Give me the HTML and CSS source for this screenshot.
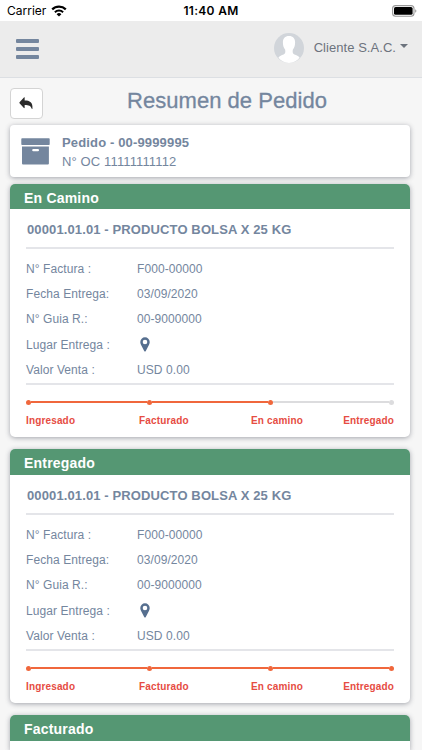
FILE: index.html
```html
<!DOCTYPE html>
<html lang="es">
<head>
    <meta charset="UTF-8">
    <meta name="viewport" content="width=device-width, initial-scale=1.0">
    <title>Resumen de Pedido</title>
    <link rel="stylesheet" href="styles.css">
</head>
<body>
    <div class="status-bar">
        <div class="carrier">
            <span>Carrier</span>
            <svg class="wifi" viewBox="0 0 16 12" width="16" height="12">
                <path d="M1.2 4.4a9.7 9.7 0 0 1 13.6 0" fill="none" stroke="#000" stroke-width="2.2"/>
                <path d="M3.9 7.2a5.9 5.9 0 0 1 8.2 0" fill="none" stroke="#000" stroke-width="2"/>
                <path d="M8 11.6L5.6 9.2a3.4 3.4 0 0 1 4.8 0z"/>
            </svg>
        </div>
        <div class="clock">11:40 AM</div>
        <svg class="battery" viewBox="0 0 25 12" width="25" height="12">
            <rect x="0.6" y="0.6" width="21.4" height="10.6" rx="3" fill="none" stroke="#999" stroke-width="1.1"/>
            <rect x="2" y="2" width="18.6" height="7.8" rx="1.6"/>
            <path d="M23.2 4.2v3.6q1.2-.6 1.2-1.8t-1.2-1.8z" fill="#999"/>
        </svg>
    </div>

    <header class="navbar">
        <div class="menu"><span></span><span></span><span></span></div>
        <div class="user">
            <svg class="avatar" viewBox="0 0 30 30" width="30" height="30">
                <circle cx="15" cy="15" r="15" fill="#d1d5da"/>
                <path d="M15 3c4 0 6.2 2.6 6.1 6.5 0 3-.9 5.6-2.3 7.3-.3 2.5-.2 3.9 1.6 4.8 2 .9 4.2 1.3 5.200 3.100A15 15 0 0 1 15 30 15 15 0 0 1 4.400 24.700c1.200-1.800 3.200-2.200 5.200-3.100 1.800-.9 1.900-2.300 1.600-4.800-1.400-1.700-2.300-4.300-2.300-7.300C8.800 5.600 11 3 15 3z" fill="#fff"/>
            </svg>
            <span class="user-name">Cliente S.A.C.</span>
            <span class="caret"></span>
        </div>
    </header>

    <main>
        <div class="title-row">
            <button class="back">
                <svg viewBox="0 0 16 14" width="15" height="13">
                    <path d="M6 0.7v3c5.600 0 9 1.800 8.400 9-.1.400-.5.400-.7 0C12.700 9.500 10.600 8.500 6 8.500v3.100c0 .5-.4.600-.8.300L.5 6.700a.8.8 0 0 1 0-1L5.200.5c.4-.4.800-.3.800.2z" fill="#2b2b2b"/>
                </svg>
            </button>
            <h1>Resumen de Pedido</h1>
        </div>

        <section class="order">
            <svg viewBox="0 0 29 27" width="29" height="27">
                <rect x="0.3" y="0.3" width="28.4" height="6.7" rx="0.8" fill="#74869e"/>
                <path d="M1 8.500h26.900v17.100q0 1-1 1H2q-1 0-1-1z" fill="#74869e"/>
                <rect x="11.2" y="11" width="6.8" height="2.3" rx="1.1" fill="#fff"/>
            </svg>
            <div>
                <div class="order-id">Pedido - 00-9999995</div>
                <div class="order-oc">N° OC 11111111112</div>
            </div>
        </section>

        <section class="card card-first">
            <h2>En Camino</h2>
            <div class="card-body">
                <h3>00001.01.01 - PRODUCTO BOLSA X 25 KG</h3>
                <dl>
                    <dt>N° Factura :</dt><dd>F000-00000</dd>
                    <dt>Fecha Entrega:</dt><dd>03/09/2020</dd>
                    <dt>N° Guia R.:</dt><dd>00-9000000</dd>
                    <dt>Lugar Entrega :</dt>
                    <dd>
                        <svg class="pin" viewBox="0 0 10 15" width="10" height="15">
                            <path d="M5 .3a4.700 4.700 0 0 1 4.700 4.700c0 1.200-.3 1.900-.8 2.900L5.800 14q-.8 1.200-1.600 0L1.100 7.900C.6 6.900.3 6.200.3 5A4.700 4.700 0 0 1 5 .3zM5 2.700a2.300 2.300 0 1 0 0 4.600 2.300 2.300 0 0 0 0-4.600z" fill="#566f8f"/>
                        </svg>
                    </dd>
                    <dt>Valor Venta :</dt><dd>USD 0.00</dd>
                </dl>
                <div class="track">
                    <i class="dot"></i><b class="bar"></b><i class="dot"></i><b class="bar"></b><i class="dot"></i><b class="bar off"></b><i class="dot off"></i>
                </div>
                <div class="steps">
                    <span>Ingresado</span><span>Facturado</span><span>En camino</span><span>Entregado</span>
                </div>
            </div>
        </section>

        <section class="card">
            <h2>Entregado</h2>
            <div class="card-body">
                <h3>00001.01.01 - PRODUCTO BOLSA X 25 KG</h3>
                <dl>
                    <dt>N° Factura :</dt><dd>F000-00000</dd>
                    <dt>Fecha Entrega:</dt><dd>03/09/2020</dd>
                    <dt>N° Guia R.:</dt><dd>00-9000000</dd>
                    <dt>Lugar Entrega :</dt>
                    <dd>
                        <svg class="pin" viewBox="0 0 10 15" width="10" height="15">
                            <path d="M5 .3a4.700 4.700 0 0 1 4.700 4.700c0 1.200-.3 1.900-.8 2.900L5.800 14q-.8 1.200-1.600 0L1.100 7.900C.6 6.900.3 6.200.3 5A4.700 4.700 0 0 1 5 .3zM5 2.700a2.300 2.300 0 1 0 0 4.600 2.300 2.300 0 0 0 0-4.600z" fill="#566f8f"/>
                        </svg>
                    </dd>
                    <dt>Valor Venta :</dt><dd>USD 0.00</dd>
                </dl>
                <div class="track">
                    <i class="dot"></i><b class="bar"></b><i class="dot"></i><b class="bar"></b><i class="dot"></i><b class="bar"></b><i class="dot"></i>
                </div>
                <div class="steps">
                    <span>Ingresado</span><span>Facturado</span><span>En camino</span><span>Entregado</span>
                </div>
            </div>
        </section>

        <section class="card card-last">
            <h2>Facturado</h2>
        </section>
    </main>
</body>
</html>
```
FILE: styles.css
```css
:root {
    --slate: #74869e;
    --green: #559773;
    --orange: #f0673c;
    --red: #e64c43;
    --line: #e4e5e9;
    --shadow: 0 1px 5px rgba(60, 65, 80, 0.45);
}

* {
    margin: 0;
    padding: 0;
    box-sizing: border-box;
}

body {
    font-family: "Liberation Sans", Arial, sans-serif;
    background: #f6f6f6;
    color: var(--slate);
    height: 750px;
    overflow: hidden;
}

svg {
    display: block;
}

.status-bar {
    height: 21px;
    padding: 0 7px;
    background: #fff;
    color: #000;
    display: grid;
    grid-template-columns: 1fr auto 1fr;
    align-items: center;
    font-family: Inter, sans-serif;
    font-size: 12px;
}

.carrier {
    display: flex;
    align-items: center;
    gap: 5px;
}

.clock {
    font-weight: 600;
    letter-spacing: 0.3px;
}

.battery {
    justify-self: end;
    margin-right: -2px;
}

.navbar {
    height: 57px;
    padding: 0 14px 0 16px;
    background: #ececec;
    border-bottom: 1px solid #dcdfe3;
    display: flex;
    align-items: center;
    justify-content: space-between;
}

.menu {
    width: 23px;
    display: grid;
    gap: 4px;
}

.menu span {
    height: 4px;
    border-radius: 1px;
    background: var(--slate);
}

.user {
    display: flex;
    align-items: center;
    color: #6c737d;
    font-size: 13px;
}

.avatar {
    margin-right: 10px;
    margin-top: -2px;
}

.user-name {
    margin-top: -3px;
    letter-spacing: 0.05px;
}

.caret {
    margin-left: 4px;
    margin-bottom: 6px;
    border: 4px solid transparent;
    border-top-color: #6c737d;
    border-bottom: 0;
}

main {
    padding: 10px 12px 0 10px;
}

.title-row {
    height: 31px;
    display: flex;
}

.back {
    width: 33px;
    height: 31px;
    background: #fff;
    border: 1px solid #d4d4d4;
    border-radius: 4px;
    display: flex;
    align-items: center;
    justify-content: center;
}

h1 {
    margin-left: 84px;
    font-size: 22px;
    font-weight: 400;
    line-height: 26px;
    letter-spacing: 0.04px;
    -webkit-text-stroke: 0.3px var(--slate);
}

.order {
    height: 52px;
    margin-top: 6px;
    padding: 1px 11px 0;
    background: #fff;
    border-radius: 4px;
    box-shadow: var(--shadow);
    display: flex;
    align-items: center;
    gap: 12px;
    font-size: 13px;
    line-height: 19px;
}

.order-id {
    font-weight: 700;
    letter-spacing: 0.15px;
}

.order-oc {
    letter-spacing: 0.13px;
}

.card {
    margin-top: 12px;
    border-radius: 5px;
    background: #fff;
    box-shadow: var(--shadow);
}

.card-first {
    margin-top: 7px;
}

.card-last {
    height: 35px;
    border-radius: 5px 5px 0 0;
}

h2 {
    height: 26px;
    padding-left: 14px;
    border-radius: 5px 5px 0 0;
    background: var(--green);
    color: #fff;
    font-size: 14px;
    line-height: 28px;
    letter-spacing: 0.2px;
}

.card-first h2 {
    height: 25px;
}

.card-body {
    height: 228px;
    padding: 0 16px;
}

h3 {
    height: 40px;
    padding-left: 1px;
    border-bottom: 2px solid var(--line);
    font-size: 13px;
    line-height: 41px;
    letter-spacing: 0.12px;
    white-space: nowrap;
}

dl {
    padding: 7px 0 0;
    height: 136px;
    border-bottom: 2px solid var(--line);
    display: grid;
    grid-template-columns: 111px 1fr;
    grid-template-rows: repeat(5, 25.4px);
    align-items: center;
    font-size: 12px;
    letter-spacing: 0.08px;
}

.pin {
    margin-left: 3px;
}

.track {
    height: 6px;
    margin-top: 14px;
    display: flex;
    align-items: center;
}

.dot {
    width: 5px;
    height: 5px;
    border-radius: 50%;
    background: var(--orange);
}

.bar {
    flex: 1;
    height: 2px;
    background: var(--orange);
}

.off {
    background: #dcdcde;
}

.steps {
    margin-top: 9px;
    display: grid;
    grid-template-columns: 113px 112px 1fr auto;
    color: var(--red);
    font-size: 10px;
    font-weight: 700;
    line-height: 13px;
    letter-spacing: 0.15px;
}
```
